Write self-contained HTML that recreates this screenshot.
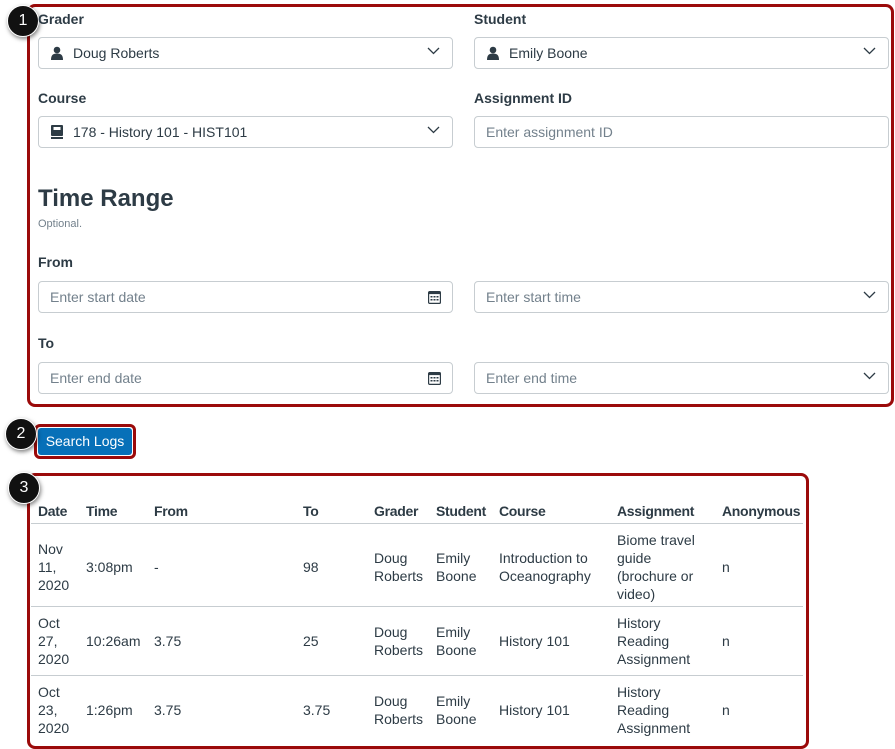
<!DOCTYPE html>
<html><head><style>
body{margin:0;width:895px;height:748px;background:#fff;font-family:"Liberation Sans",sans-serif;color:#2d3b45;position:relative;overflow:hidden}
.a{position:absolute}
.lbl{font-size:14px;font-weight:bold;color:#2d3b45}
.inp{position:absolute;height:30px;border:1px solid #c7cdd1;border-radius:4px;background:#fff;font-size:14px;line-height:30px;box-sizing:content-box}
.ph{color:#73818c;padding-left:11px}
.val{color:#2d3b45}
.chev{position:absolute;right:12px;top:9px}
.cal{position:absolute;right:11px;top:8px}
.box{position:absolute;border:3px solid #9b0a0a;border-radius:8px}
.num{position:absolute;width:30px;height:30px;border-radius:50%;background:#111;color:#fff;font-size:16px;text-align:center;line-height:30px;box-shadow:1px 2px 4px rgba(0,0,0,.5);border:1px solid #fff}
.c{position:absolute;font-size:14px;line-height:18px;color:#2d3b45}
.h{font-weight:bold;letter-spacing:-0.3px}
.line{position:absolute;left:31px;width:772px;height:1px;background:#c7cdd1}
</style></head><body>
<div class="box" style="left:27px;top:4px;width:861px;height:397px"></div>
<div class="num" style="left:7px;top:5px">1</div>

<div class="a lbl" style="left:38px;top:11px">Grader</div>
<div class="inp" style="left:38px;top:37px;width:413px">
<svg class="a" style="left:12px;top:8px" width="12" height="14" viewBox="0 0 12 14"><circle cx="6" cy="4" r="3.3" fill="#2d3b45"/><path d="M0 14 C0 9 2 7.5 6 7.5 C10 7.5 12 9 12 14Z" fill="#2d3b45"/></svg>
<span class="a val" style="left:34px">Doug Roberts</span>
<svg class="chev" width="13" height="8" viewBox="0 0 13 8"><path d="M1 1l5.5 5.5L12 1" stroke="#2d3b45" stroke-width="1.3" fill="none"/></svg></div>

<div class="a lbl" style="left:474px;top:11px">Student</div>
<div class="inp" style="left:474px;top:37px;width:413px">
<svg class="a" style="left:12px;top:8px" width="12" height="14" viewBox="0 0 12 14"><circle cx="6" cy="4" r="3.3" fill="#2d3b45"/><path d="M0 14 C0 9 2 7.5 6 7.5 C10 7.5 12 9 12 14Z" fill="#2d3b45"/></svg>
<span class="a val" style="left:34px">Emily Boone</span>
<svg class="chev" width="13" height="8" viewBox="0 0 13 8"><path d="M1 1l5.5 5.5L12 1" stroke="#2d3b45" stroke-width="1.3" fill="none"/></svg></div>

<div class="a lbl" style="left:38px;top:90px">Course</div>
<div class="inp" style="left:38px;top:116px;width:413px">
<svg class="a" style="left:12px;top:8px" width="12" height="14" viewBox="0 0 12 14"><rect x="0" y="0" width="12" height="11" rx="1" fill="#2d3b45"/><rect x="2.5" y="2" width="7" height="3" fill="#fff"/><rect x="0" y="12" width="12" height="2" fill="#2d3b45"/></svg>
<span class="a val" style="left:34px">178 - History 101 - HIST101</span>
<svg class="chev" width="13" height="8" viewBox="0 0 13 8"><path d="M1 1l5.5 5.5L12 1" stroke="#2d3b45" stroke-width="1.3" fill="none"/></svg></div>

<div class="a lbl" style="left:474px;top:90px">Assignment ID</div>
<div class="inp ph" style="left:474px;top:116px;width:402px">Enter assignment ID</div>

<div class="a" style="left:38px;top:185px;font-size:24px;font-weight:bold;color:#2d3b45">Time Range</div>
<div class="a" style="left:38px;top:218px;font-size:11px;color:#73818c">Optional.</div>

<div class="a lbl" style="left:38px;top:254px">From</div>
<div class="inp ph" style="left:38px;top:281px;width:402px">Enter start date
<svg class="cal" width="13" height="14" viewBox="0 0 13 14"><rect x="0.6" y="1.6" width="11.8" height="11.8" rx="1" stroke="#2d3b45" stroke-width="1.2" fill="none"/><rect x="0.6" y="1.6" width="11.8" height="2.5" fill="#2d3b45"/><g fill="#2d3b45"><rect x="2.5" y="6" width="2" height="1.5"/><rect x="5.5" y="6" width="2" height="1.5"/><rect x="8.5" y="6" width="2" height="1.5"/><rect x="2.5" y="9" width="2" height="1.5"/><rect x="5.5" y="9" width="2" height="1.5"/><rect x="8.5" y="9" width="2" height="1.5"/></g></svg></div>
<div class="inp ph" style="left:474px;top:281px;width:402px">Enter start time
<svg class="chev" width="13" height="8" viewBox="0 0 13 8"><path d="M1 1l5.5 5.5L12 1" stroke="#2d3b45" stroke-width="1.3" fill="none"/></svg></div>

<div class="a lbl" style="left:38px;top:335px">To</div>
<div class="inp ph" style="left:38px;top:362px;width:402px">Enter end date
<svg class="cal" width="13" height="14" viewBox="0 0 13 14"><rect x="0.6" y="1.6" width="11.8" height="11.8" rx="1" stroke="#2d3b45" stroke-width="1.2" fill="none"/><rect x="0.6" y="1.6" width="11.8" height="2.5" fill="#2d3b45"/><g fill="#2d3b45"><rect x="2.5" y="6" width="2" height="1.5"/><rect x="5.5" y="6" width="2" height="1.5"/><rect x="8.5" y="6" width="2" height="1.5"/><rect x="2.5" y="9" width="2" height="1.5"/><rect x="5.5" y="9" width="2" height="1.5"/><rect x="8.5" y="9" width="2" height="1.5"/></g></svg></div>
<div class="inp ph" style="left:474px;top:362px;width:402px">Enter end time
<svg class="chev" width="13" height="8" viewBox="0 0 13 8"><path d="M1 1l5.5 5.5L12 1" stroke="#2d3b45" stroke-width="1.3" fill="none"/></svg></div>

<div class="box" style="left:34px;top:424px;width:96px;height:29px;border-radius:6px"></div>
<div class="a" style="left:38px;top:428px;width:94px;height:27px;background:#0770b8;border-radius:3px;color:#fff;font-size:14px;text-align:center;line-height:27px">Search Logs</div>
<div class="num" style="left:5px;top:418px">2</div>

<div class="box" style="left:27px;top:473px;width:776px;height:270px"></div>
<div class="num" style="left:8px;top:472px">3</div>

<div class="c h" style="left:38px;top:502px">Date</div>
<div class="c h" style="left:86px;top:502px">Time</div>
<div class="c h" style="left:154px;top:502px">From</div>
<div class="c h" style="left:303px;top:502px">To</div>
<div class="c h" style="left:374px;top:502px">Grader</div>
<div class="c h" style="left:436px;top:502px">Student</div>
<div class="c h" style="left:499px;top:502px">Course</div>
<div class="c h" style="left:617px;top:502px">Assignment</div>
<div class="c h" style="left:722px;top:502px">Anonymous</div>
<div class="line" style="top:523px"></div>

<div class="c" style="left:38px;top:540px">Nov<br>11,<br>2020</div>
<div class="c" style="left:86px;top:558px">3:08pm</div>
<div class="c" style="left:154px;top:558px">-</div>
<div class="c" style="left:303px;top:558px">98</div>
<div class="c" style="left:374px;top:549px">Doug<br>Roberts</div>
<div class="c" style="left:436px;top:549px">Emily<br>Boone</div>
<div class="c" style="left:499px;top:549px">Introduction to<br>Oceanography</div>
<div class="c" style="left:617px;top:531px">Biome travel<br>guide<br>(brochure or<br>video)</div>
<div class="c" style="left:722px;top:558px">n</div>
<div class="line" style="top:606px"></div>

<div class="c" style="left:38px;top:614px">Oct<br>27,<br>2020</div>
<div class="c" style="left:86px;top:632px">10:26am</div>
<div class="c" style="left:154px;top:632px">3.75</div>
<div class="c" style="left:303px;top:632px">25</div>
<div class="c" style="left:374px;top:623px">Doug<br>Roberts</div>
<div class="c" style="left:436px;top:623px">Emily<br>Boone</div>
<div class="c" style="left:499px;top:632px">History 101</div>
<div class="c" style="left:617px;top:614px">History<br>Reading<br>Assignment</div>
<div class="c" style="left:722px;top:632px">n</div>
<div class="line" style="top:675px"></div>

<div class="c" style="left:38px;top:683px">Oct<br>23,<br>2020</div>
<div class="c" style="left:86px;top:701px">1:26pm</div>
<div class="c" style="left:154px;top:701px">3.75</div>
<div class="c" style="left:303px;top:701px">3.75</div>
<div class="c" style="left:374px;top:692px">Doug<br>Roberts</div>
<div class="c" style="left:436px;top:692px">Emily<br>Boone</div>
<div class="c" style="left:499px;top:701px">History 101</div>
<div class="c" style="left:617px;top:683px">History<br>Reading<br>Assignment</div>
<div class="c" style="left:722px;top:701px">n</div>
</body></html>
